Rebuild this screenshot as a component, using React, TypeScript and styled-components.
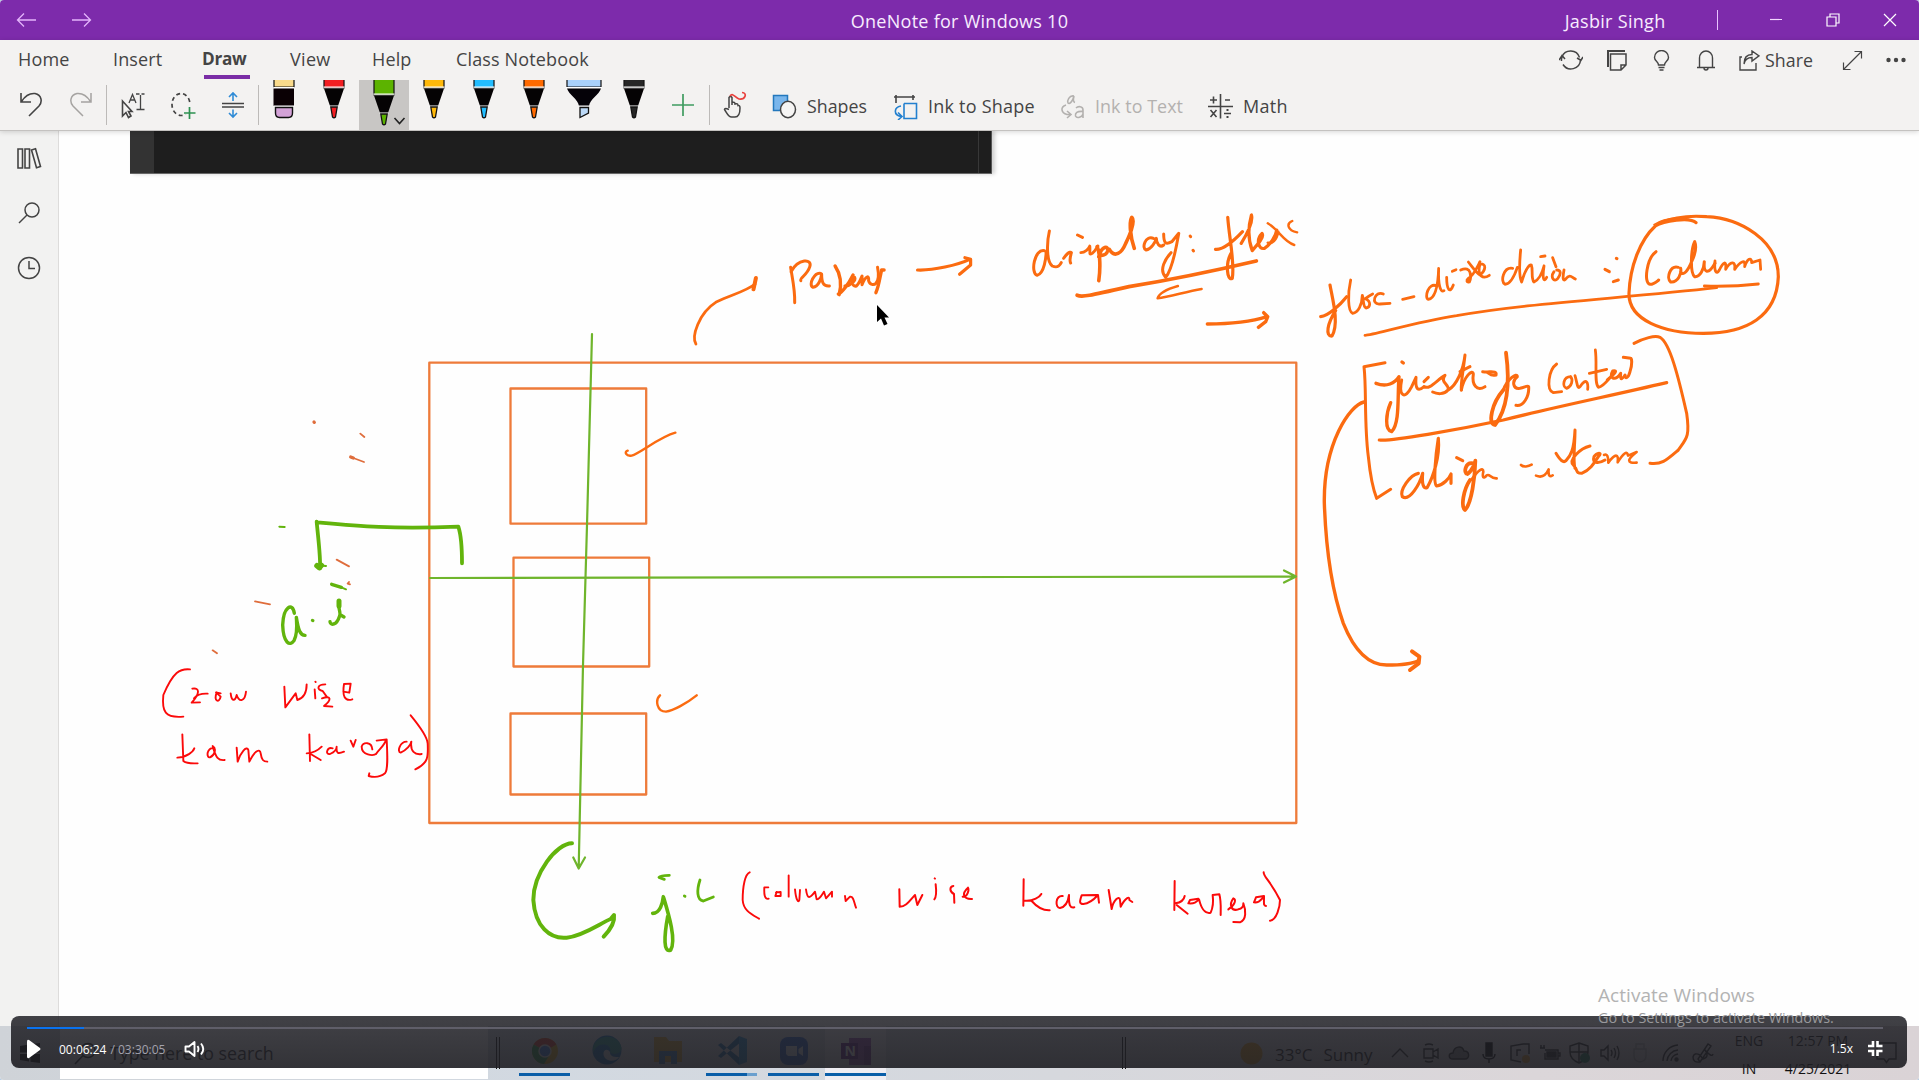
import React from "react";
import styled, { createGlobalStyle } from "styled-components";

const GlobalStyle = createGlobalStyle`
  body { margin: 0; background: #b9cde0; overflow: hidden; }
  * { box-sizing: border-box; }
`;

const font = `"Open Sans", "Noto Sans", sans-serif`;

const Screen = styled.div`
  position: relative;
  display: flex;
  flex-direction: column;
  width: 1919px;
  height: 1080px;
  overflow: hidden;
  border-radius: 4px;
  background: #fff;
  font-family: ${font};
  color: #444;
`;

/* ---------- title bar ---------- */
const TitleBar = styled.header`
  display: grid;
  grid-template-columns: 1fr auto 1fr;
  align-items: center;
  height: 40px;
  background: #7d2bab;
  color: #f8ecff;
`;
const TitleNav = styled.div`
  display: flex;
  gap: 34px;
  padding-left: 16px;
`;
const Label = styled.span<{ $size?: number; $track?: number; $color?: string; $drop?: number }>`
  padding-top: ${(p) => p.$drop ?? 0}px;
  font-size: ${(p) => p.$size ?? 17}px;
  letter-spacing: ${(p) => p.$track ?? 0}px;
  color: ${(p) => p.$color ?? "inherit"};
  line-height: 1.3;
  white-space: nowrap;
`;
const WindowSide = styled.div`
  display: flex;
  align-items: center;
  justify-content: flex-end;
  height: 100%;
  padding-right: 22px;
`;
const WindowDivider = styled.i`
  width: 1.5px;
  height: 20px;
  margin: 0 51px 0 51px;
  background: #e9c4ff;
`;
const WindowButtons = styled.div`
  display: flex;
  gap: 43px;
`;

/* ---------- ribbon ---------- */
const Ribbon = styled.div`
  position: relative;
  z-index: 2;
  height: 91px;
  background: #f3f2f1;
  border-bottom: 1px solid #c4c2c0;
  box-shadow: 0 1px 5px rgba(0, 0, 0, 0.16);
`;
const TabRow = styled.nav`
  display: flex;
  justify-content: space-between;
  height: 40px;
`;
const Tabs = styled.div`
  display: flex;
  padding-left: 18px;
`;
const Tab = styled.div<{ $w: number; $active?: boolean; $track?: number }>`
  position: relative;
  width: ${(p) => p.$w}px;
  padding-top: 7px;
  font-size: ${(p) => (p.$active ? 17.2 : 18)}px;
  line-height: 24px;
  white-space: nowrap;
  letter-spacing: ${(p) => p.$track ?? 0.15}px;
  font-weight: ${(p) => (p.$active ? 700 : 400)};
  &::after {
    content: "";
    display: ${(p) => (p.$active ? "block" : "none")};
    position: absolute;
    left: 2px;
    top: 35px;
    width: 46px;
    height: 4px;
    background: #7a2da6;
  }
`;
const Actions = styled.div`
  display: flex;
  align-items: center;
  padding-right: 9px;
`;
const ActionCell = styled.div<{ $w: number }>`
  display: flex;
  align-items: center;
  justify-content: center;
  gap: 5px;
  width: ${(p) => p.$w}px;
`;
const ToolRow = styled.div`
  display: flex;
  height: 50px;
  padding-left: 6px;
`;
const Tool = styled.div<{ $active?: boolean }>`
  display: flex;
  justify-content: center;
  align-items: center;
  width: 50px;
  height: 50px;
  background: ${(p) => (p.$active ? "#c8c6c4" : "transparent")};
`;
const Divider = styled.i<{ $w?: number }>`
  width: ${(p) => p.$w ?? 1}px;
  height: 40px;
  margin-top: 5px;
  border-left: 1px solid #bcbab8;
`;
const TextTool = styled.div<{ $w: number; $off?: boolean; $inset?: number }>`
  display: flex;
  align-items: center;
  gap: 10px;
  width: ${(p) => p.$w}px;
  padding-top: 3px;
  padding-left: ${(p) => p.$inset ?? 0}px;
  color: ${(p) => (p.$off ? "#b3b1af" : "#444")};
`;

/* ---------- workspace ---------- */
const Workspace = styled.main`
  display: flex;
  flex: 1;
  min-height: 0;
`;
const Rail = styled.aside`
  display: flex;
  flex-direction: column;
  align-items: center;
  gap: 29px;
  width: 59px;
  padding-top: 14px;
  background: #f2f2f1;
  border-right: 1.5px solid #dddcdb;
`;
const Canvas = styled.section`
  position: relative;
  flex: 1;
  background: #fefefe;
`;
const Clip = styled.div`
  display: flex;
  justify-content: space-between;
  width: 862px;
  height: 43px;
  margin-left: 71px;
  background: #1e1e1e;
  border-bottom: 1px solid #666;
  box-shadow: 3px 0 4px rgba(0, 0, 0, 0.18);
  &::before { content: ""; width: 24px; background: #333; }
  &::after { content: ""; width: 12px; border-left: 1px solid #383838; border-right: 1px solid #555; }
`;
const InkSheet = styled.svg`
  position: absolute;
  inset: 0;
  width: 1860px;
  height: 895px;
  fill: none;
  stroke-linecap: round;
  stroke-linejoin: round;
  & path { vector-effect: non-scaling-stroke; }
`;

/* ---------- taskbar ---------- */
const Taskbar = styled.footer`
  display: flex;
  height: 54px;
  background: linear-gradient(90deg, #cfd3d8, #d2d9e1 28%, #d6d8dd 55%, #dbd6d9 80%, #dad3d6);
  color: #111;
`;
const StartCell = styled.div`
  display: flex;
  align-items: center;
  justify-content: center;
  width: 60px;
`;
const SearchBox = styled.div`
  display: flex;
  align-items: center;
  gap: 13px;
  width: 428px;
  height: 53px;
  padding: 2px 0 0 14px;
  background: #fff;
`;
const Bars = styled.div<{ $l: number; $r: number }>`
  width: 4px;
  height: 32px;
  margin: 11px ${(p) => p.$r}px 0 ${(p) => p.$l}px;
  border: solid #111;
  border-width: 0 1px;
`;
const AppCell = styled.div<{ $w: number; $line?: string; $lit?: boolean; $gap?: number }>`
  display: flex;
  flex-direction: column;
  align-items: center;
  justify-content: flex-end;
  width: ${(p) => p.$w}px;
  margin-left: ${(p) => p.$gap ?? 0}px;
  padding-bottom: 4px;
  background: ${(p) => (p.$lit ? "#efedf2" : "transparent")};
  &::after {
    content: "";
    width: 100%;
    height: 3px;
    margin-top: 8px;
    background: ${(p) => p.$line ?? "transparent"};
  }
`;
const Tray = styled.div`
  display: flex;
  align-items: center;
  flex: 1;
`;
const Weather = styled.div`
  display: flex;
  gap: 11px;
  width: 122px;
  padding: 4px 0 0 12px;
`;
const TrayItem = styled.div<{ $w: number }>`
  display: flex;
  justify-content: center;
  width: ${(p) => p.$w}px;
`;
const Stack = styled.div<{ $w: number }>`
  display: flex;
  flex-direction: column;
  justify-content: space-between;
  align-items: center;
  width: ${(p) => p.$w}px;
  height: 50px;
  padding-top: 4px;
`;

/* ---------- player ---------- */
const Player = styled.div`
  position: absolute;
  left: 11px;
  top: 1016px;
  width: 1896px;
  height: 52px;
  padding: 11px 24px 0 16px;
  border-radius: 8px;
  background: linear-gradient(rgba(32, 32, 38, 0.85), rgba(31, 31, 36, 0.91));
  color: #fff;
`;
const Track = styled.div`
  height: 2px;
  background: #5f5e69;
`;
const Played = styled.div`
  height: 2px;
  background: #0a72ee;
`;
const Controls = styled.div`
  display: flex;
  align-items: center;
  height: 41px;
  margin-top: -1px;
`;
const Clock = styled.div`
  display: flex;
  gap: 4px;
  margin: 2px 19px 0 18px;
`;
const Spacer = styled.div` flex: 1; `;

const Watermark = styled.div`
  position: absolute;
  left: 1598px;
  top: 983px;
  display: flex;
  flex-direction: column;
  gap: 1px;
  color: #b3b3b3;
`;
const Pointer = styled.svg`
  position: absolute;
  left: 876px;
  top: 305px;
`;

/* ---------- icons ---------- */
type IconProps = { w?: number; h?: number; box?: string; c?: string; s?: number; children: React.ReactNode };
const Icon = ({ w = 24, h = 24, box, c = "#444", s = 1.4, children }: IconProps) => (
  <svg width={w} height={h} viewBox={box ?? `0 0 ${w} ${h}`} fill="none" stroke={c} strokeWidth={s}>
    {children}
  </svg>
);

const Pen = ({ color, tip = color, active }: { color: string; tip?: string; active?: boolean }) => (
  <Tool $active={active}>
    <svg width="50" height="50" viewBox="0 0 50 50">
      <path d={`M15 0V${active ? 15 : 8}H35V0`} fill={color} stroke="#111" strokeWidth="1.2" />
      <g transform={`translate(0 ${active ? 7 : 0})`}>
        <path d="M15 8.500H35L29 26H21Z" fill="#050304" />
        <path d="M14.500 7.200H35.500M20.500 26H29.500" stroke="#fff" strokeWidth="1.2" />
        <path d="M21.800 27H28.200L26.500 37Q25 38.500 23.500 37Z" fill={tip} stroke="#111" strokeWidth="1.3" />
      </g>
      {active && <path d="M35.500 38L40.500 43.500L45.500 38" fill="none" stroke="#222" strokeWidth="1.6" />}
    </svg>
  </Tool>
);

/* ---------- ink ---------- */
const ORANGE = "#fb6b10";
const GREEN = "#62b40c";
const RED = "#fb0a0a";

type Stroke = { c: string; w: number; d: string };
type Sheet = { at: [number, number]; k: [number, number]; strokes: Stroke[] };
const third = 1 / 3;

const sheets: Sheet[] = [
  {
    at: [0, 0],
    k: [1, 1],
    strokes: [
      { c: "#ee7b3a", w: 2.3, d: "M429.300 362.700H1296.300V823H429.300Z" },
      { c: "#ee7b3a", w: 2.3, d: "M510.500 388.500H646.200V523.700H510.500Z" },
      { c: "#ee7b3a", w: 2.3, d: "M513.500 557.700H649.200V666.500H513.500Z" },
      { c: "#ee7b3a", w: 2.3, d: "M510.500 713.500H646.200V794.500H510.500Z" },
      { c: "#6fb52c", w: 2.2, d: "M430 578L1295 576.500M1284 570.500L1296 576.500L1284 582.500" },
      { c: "#6fb52c", w: 2.2, d: "M592 334L587 525L583 665L578.700 868M573.300 857.500L578.700 868.500L585 857.500" },
    ],
  },
  {
    at: [400, 320],
    k: [third, third],
    strokes: [
      { c: ORANGE, w: 2.4, d: "M683 392C672 395 678 410 695 407C720 400 780 350 826 338M780 1126C765 1140 770 1175 798 1175C820 1172 860 1150 890 1126" },
    ],
  },
  {
    at: [680, 190],
    k: [1 / 2.45, third],
    strokes: [
      { c: ORANGE, w: 2.8, d: "M39 462C28 440 45 370 90 335C130 312 160 305 184 282" },
      { c: ORANGE, w: 4, d: "M186 264L180 298" },
      { c: ORANGE, w: 3, d: "M271 232C276 270 282 300 281 338M272 245C290 205 325 205 318 230C312 255 292 265 296 272M345 250C330 245 313 285 326 292C340 290 346 265 347 252C347 275 350 290 366 288" },
      { c: ORANGE, w: 3.4, d: "M380 228C392 250 398 275 390 314M424 255C412 285 396 308 388 312" },
      { c: ORANGE, w: 3, d: "M404 288C415 290 432 272 428 262C418 262 420 292 432 288C440 280 444 262 446 258L446 284C455 256 464 255 462 272C465 285 475 286 480 280C489 268 486 245 484 232" },
      { c: ORANGE, w: 3.4, d: "M480 308C488 285 490 258 494 240L500 240" },
      { c: ORANGE, w: 3.2, d: "M582 240C620 242 680 225 710 208M698 203L712 208L712 225L685 253" },
      { c: ORANGE, w: 3, d: "M905 123C898 160 898 215 912 228C925 235 930 228 934 218M893 182C868 175 858 250 875 256C893 250 897 200 897 185M940 205C945 195 955 182 959 188C956 200 954 212 957 219M974 135L986 142" },
      { c: ORANGE, w: 2.8, d: "M982 188C992 188 1002 176 1004 168C1006 186 1000 198 1010 190C1018 182 1020 176 1024 168" },
      { c: ORANGE, w: 3.6, d: "M1022 170C1030 190 1030 240 1026 272M1026 200C1034 165 1050 168 1048 182C1046 192 1038 196 1033 196M1052 178C1065 205 1082 190 1092 160C1108 120 1114 90 1107 82C1100 95 1103 140 1113 175" },
      { c: ORANGE, w: 3, d: "M1160 145C1140 135 1130 175 1142 180C1155 178 1165 155 1167 145C1167 160 1175 175 1185 165M1185 132C1185 160 1190 165 1205 155L1222 130C1215 180 1205 240 1190 262C1172 240 1190 205 1203 188M1250 138L1251 140M1257 181L1258 183" },
      { c: ORANGE, w: 3.2, d: "M1342 82C1345 140 1360 220 1353 265C1340 275 1336 220 1350 190M1312 178C1330 180 1355 155 1378 125M1375 160C1395 120 1404 90 1400 75C1392 110 1392 150 1402 182C1418 160 1432 140 1426 130C1412 145 1415 180 1432 175C1445 165 1460 140 1462 120" },
      { c: ORANGE, w: 2.4, d: "M1440 100C1468 120 1478 155 1505 165M1466 125C1462 150 1450 165 1440 158M1500 93C1485 100 1488 122 1512 127" },
      { c: ORANGE, w: 3.8, d: "M973 316C985 322 1000 318 1100 290C1200 270 1300 245 1412 213" },
      { c: ORANGE, w: 2.4, d: "M1278 297C1240 305 1200 320 1170 325C1175 305 1200 295 1220 288" },
      { c: ORANGE, w: 3.4, d: "M1292 402C1340 402 1400 395 1438 380M1430 368L1440 380L1435 395L1417 412" },
    ],
  },
  {
    at: [1290, 190],
    k: [third, third],
    strokes: [
      { c: ORANGE, w: 3.2, d: "M92 380C115 378 150 345 170 320M120 285C128 330 148 400 126 438C105 440 112 400 137 362" },
      { c: ORANGE, w: 2.8, d: "M182 270C173 310 173 365 188 370C205 368 216 345 217 316C222 330 218 350 228 354C242 352 244 334 226 326C236 318 244 314 248 312M280 312C255 300 240 345 270 342L300 340M338 328L372 320" },
      { c: ORANGE, w: 2.8, d: "M440 288C415 275 402 325 415 328C435 325 444 295 446 235C444 280 450 310 462 302M470 262C470 300 480 312 490 285M487 244L498 239M512 240C545 225 545 262 538 276C530 278 528 270 535 265C550 258 560 235 570 215M535 216C550 235 560 250 570 255C588 240 590 220 570 222C560 260 580 268 598 256" },
      { c: ORANGE, w: 2.8, d: "M668 235C640 230 630 275 645 283C660 282 672 262 682 232M692 180C688 220 688 262 695 276C705 240 718 222 724 225C730 240 722 265 732 276C745 270 755 255 762 228M752 200L765 198M762 228C756 268 762 278 770 262M788 203L798 230M792 245C780 262 792 278 803 266C815 250 812 240 800 240M822 240C818 262 818 275 826 268C840 250 845 262 856 267" },
      { c: ORANGE, w: 3, d: "M945 238L958 245M979 205L981 206M970 275L985 270" },
      { c: ORANGE, w: 3.2, d: "M1110 98C1150 82 1200 76 1250 80C1350 85 1465 150 1465 260C1460 380 1370 430 1240 430C1120 430 1015 390 1017 310C1020 230 1050 150 1096 108C1120 92 1200 80 1218 98" },
      { c: ORANGE, w: 1.6, d: "M1092 104C1110 92 1140 85 1160 84" },
      { c: ORANGE, w: 3, d: "M1098 185C1070 205 1060 280 1080 283C1092 283 1100 275 1106 270M1165 232C1140 225 1128 265 1142 276C1165 278 1175 250 1172 235M1172 245C1180 260 1195 240 1205 215C1217 190 1220 170 1214 155C1202 180 1200 250 1214 260C1230 262 1242 238 1243 215C1240 250 1255 255 1275 220" },
      { c: ORANGE, w: 2.8, d: "M1275 213C1272 240 1278 258 1288 240C1300 215 1310 210 1307 238C1320 215 1338 210 1334 238C1350 215 1368 205 1364 230C1372 205 1385 200 1385 218L1410 210L1412 238" },
      { c: ORANGE, w: 2.8, d: "M225 436C240 438 380 395 500 377C700 340 1000 325 1280 293M1243 288C1300 290 1350 288 1405 282" },
      { c: ORANGE, w: 3, d: "M285 518L222 530C230 600 222 700 235 800C240 850 250 900 260 925L302 898" },
      { c: ORANGE, w: 3.4, d: "M258 580C290 592 315 580 327 560C322 620 330 700 305 725C283 720 288 670 302 638M336 516L340 519" },
      { c: ORANGE, w: 3, d: "M335 570C325 620 345 630 365 590L378 562C375 600 385 605 402 590M402 575L415 562M402 590C420 600 440 570 465 556C448 578 480 582 474 600C462 615 440 612 428 606M475 600C500 585 520 540 525 495C520 540 512 580 514 600" },
      { c: ORANGE, w: 3, d: "M510 545L540 530M514 600C522 560 548 535 550 552C545 585 560 605 585 590M578 545C600 548 622 540 618 555C600 560 600 550 590 546" },
      { c: ORANGE, w: 3.8, d: "M648 488C655 540 665 640 615 705C593 700 605 640 640 600" },
      { c: ORANGE, w: 3, d: "M640 600C650 570 682 545 682 560C665 572 668 598 690 595C705 592 712 585 716 590C718 620 700 650 678 646" },
      { c: ORANGE, w: 2.8, d: "M800 522C775 540 768 600 790 608L815 605M842 560C820 560 815 590 830 595C845 590 850 570 842 560M855 557C862 580 862 600 870 590C890 560 895 580 893 598M916 480C922 520 912 580 925 592C935 590 950 575 958 565M898 550L950 538" },
      { c: ORANGE, w: 3, d: "M952 570C975 550 985 540 968 543C955 565 975 575 992 550C990 572 995 570 1005 555C1005 568 1015 565 1020 545C1028 520 1025 505 1022 505L1000 502" },
      { c: ORANGE, w: 3.2, d: "M268 750C300 755 500 720 640 690C800 650 950 620 1130 578" },
      { c: ORANGE, w: 3, d: "M1032 460C1060 445 1095 435 1110 442C1140 460 1165 560 1190 670C1200 740 1190 745 1165 780C1130 810 1115 825 1080 820" },
      { c: ORANGE, w: 3.2, d: "M385 850C360 855 328 900 337 920C360 935 390 880 398 850C395 880 400 900 412 892C430 860 450 800 445 745C438 790 428 880 440 888C460 885 478 865 483 852L483 880M500 803L518 812" },
      { c: ORANGE, w: 3.8, d: "M550 820C525 815 520 850 532 852C545 845 555 820 556 812C555 860 545 940 525 960C512 950 520 900 540 870" },
      { c: ORANGE, w: 2.6, d: "M545 868C565 840 580 830 580 845C576 862 580 868 590 856C600 850 600 866 620 865M693 825C700 832 715 830 725 824M738 857C755 864 768 856 776 838C774 858 780 862 788 856" },
      { c: ORANGE, w: 3, d: "M798 790C810 810 820 820 828 812C842 798 852 780 855 720C855 770 848 810 855 835M900 768C870 775 835 810 850 825C865 840 855 850 875 850C900 840 912 820 925 800C940 785 920 788 912 800C905 820 925 822 945 810" },
      { c: ORANGE, w: 2.6, d: "M942 795C952 790 955 800 955 818C975 790 987 790 983 817C1000 790 1012 780 1014 797L1040 786C1010 810 1010 820 1040 818" },
      { c: ORANGE, w: 3.4, d: "M222 636C180 645 100 760 103 940C108 1080 125 1200 160 1300C200 1400 250 1425 290 1425C330 1425 365 1422 385 1412" },
      { c: ORANGE, w: 4, d: "M366 1384L388 1400L386 1420L360 1440" },
    ],
  },
  {
    at: [140, 400],
    k: [third, third],
    strokes: [
      { c: GREEN, w: 3.8, d: "M530 367C650 378 750 388 955 380C965 410 966 450 966 490M530 365C535 420 542 470 540 505" },
      { c: GREEN, w: 5.5, d: "M531 497L538 503L544 496" },
      { c: GREEN, w: 3.4, d: "M463 640C458 605 430 620 428 675C430 730 450 740 462 722C474 700 470 670 469 652C475 690 480 705 495 706M575 553L604 562M597 612C595 635 605 640 598 650C590 675 572 678 570 665M602 645L612 651" },
      { c: GREEN, w: 5, d: "M597 603L597 618" },
      { c: GREEN, w: 2, d: "M418 380L434 381M604 562L618 568M550 497L558 498" },
      { c: GREEN, w: 3, d: "M517 661L519 662" },
      { c: "#df6d3c", w: 1.8, d: "M661 101L673 111M632 171L672 186M590 479L627 499M345 604L390 613M218 751L231 760M627 546L623 551L630 553" },
      { c: "#df6d3c", w: 3.2, d: "M522 66L523 67M632 171L640 174" },
      { c: RED, w: 1.9, d: "M150 808C120 805 100 815 70 885C65 935 75 955 130 950M157 866C180 862 180 880 155 908L180 907M162 895C170 885 185 880 203 881M230 877C220 905 238 910 242 890L228 877L242 880M272 880C275 905 285 905 290 885C298 908 315 905 318 875" },
      { c: RED, w: 1.9, d: "M433 860L436 922L467 880L472 900C490 895 500 880 500 853M524 868L526 895M526 845L527 846M556 853C530 853 530 870 548 873L560 890M546 895C575 885 575 900 552 918L577 920M610 875L628 878L632 851L612 852C606 890 615 905 637 898" },
      { c: RED, w: 1.9, d: "M127 1003L130 1083C140 1092 160 1090 173 1090M112 1073C140 1072 160 1055 163 1045M222 1045C200 1040 198 1075 210 1072C225 1065 230 1045 218 1038C228 1075 235 1082 254 1080M290 1043L293 1085C300 1060 320 1035 325 1050L328 1085C345 1050 360 1045 362 1060C365 1080 370 1085 382 1085" },
      { c: RED, w: 1.9, d: "M508 1003L510 1083M500 1060C520 1060 535 1050 545 1040M512 1062L542 1080M578 1045C560 1040 555 1065 570 1062C585 1055 590 1045 590 1040C588 1062 595 1062 612 1055M632 1022L640 1040L647 1020M697 1048C695 1025 670 1025 665 1040C665 1065 700 1070 710 1060M710 1022L740 1018C742 1060 745 1110 735 1120C720 1132 700 1132 686 1128L688 1120M738 1020C735 1035 715 1050 708 1062" },
      { c: RED, w: 1.9, d: "M800 1025C780 1025 770 1055 782 1058C800 1050 812 1035 814 1025C810 1055 825 1065 845 1062M812 946C840 980 862 1015 863 1030C865 1070 865 1090 826 1108" },
    ],
  },
  {
    at: [500, 800],
    k: [third, third],
    strokes: [
      { c: GREEN, w: 4, d: "M216 130C170 130 100 220 100 300C105 380 150 418 200 413C250 408 300 370 332 357L342 345C345 365 330 390 311 410" },
      { c: GREEN, w: 3.6, d: "M458 340C480 340 488 310 490 290C505 340 530 420 512 450C490 460 492 410 503 350" },
      { c: GREEN, w: 2.8, d: "M508 226C495 226 480 228 477 232L493 238M553 288L555 289M600 240C590 270 590 300 610 303L640 291" },
      { c: RED, w: 1.9, d: "M749 217C735 222 728 260 728 300C730 330 750 340 777 356M805 262L793 262C792 280 793 300 806 296M830 276L826 288L842 288L842 276L828 277M866 226L866 290M885 268C888 300 895 310 898 300L900 270M918 268C922 300 930 295 945 275L950 298C960 298 968 280 972 275L978 295L996 275L996 290M1035 288L1037 303L1050 290C1062 288 1062 310 1068 323" },
    ],
  },
  {
    at: [880, 840],
    k: [third, third],
    strokes: [
      { c: RED, w: 2, d: "M58 148L59 200C80 200 90 180 105 165L112 195L127 165M167 133C169 150 170 170 163 178M164 115L165 116M220 138C208 140 208 155 222 162L223 188M248 170C262 172 268 150 264 143C245 160 248 178 276 177" },
      { c: RED, w: 2, d: "M431 118L430 197M433 182C460 185 480 170 484 162M455 183C470 200 490 212 509 211M548 168C525 165 525 205 540 204C560 200 565 180 567 165C566 195 570 205 583 202M652 165L605 166C598 185 598 192 610 192C630 190 645 175 654 165L657 188M686 150L695 207C700 180 718 165 720 180L722 200C735 175 750 165 748 180L757 186" },
      { c: RED, w: 2, d: "M884 123L883 210M886 190C900 188 912 180 914 168M890 195L923 221M955 176L930 180L925 190C945 192 950 185 957 178C965 210 975 222 992 218C1000 200 1000 180 998 165L1018 163C1024 185 1022 205 1022 225M1045 208C1065 195 1070 178 1060 175C1045 195 1055 215 1075 208C1092 205 1090 195 1090 190C1098 210 1100 240 1080 247L1060 246" },
      { c: RED, w: 2, d: "M1152 168L1128 172L1122 187C1140 190 1145 175 1152 170C1152 190 1150 197 1158 198M1151 97C1150 110 1170 120 1200 180C1200 200 1190 240 1170 242" },
    ],
  },
];

const Ink = () => (
  <InkSheet viewBox="59 131 1860 895">
    {sheets.map((s, i) => (
      <g key={i} transform={`translate(${s.at[0]} ${s.at[1]}) scale(${s.k[0]} ${s.k[1]})`}>
        {s.strokes.map((t, j) => (
          <path key={j} d={t.d} stroke={t.c} strokeWidth={t.w} />
        ))}
      </g>
    ))}
  </InkSheet>
);

export default function App() {
  return (
    <>
      <GlobalStyle />
      <Screen>
        <TitleBar>
          <TitleNav>
            <Icon w={21} h={16} c="#e3b5fb" s={1.3}><path d="M20 8H1.500M8 1.500L1.500 8L8 14.500" /></Icon>
            <Icon w={21} h={16} c="#e3b5fb" s={1.3}><path d="M1 8H19.500M13 1.500L19.500 8L13 14.500" /></Icon>
          </TitleNav>
          <Label $size={18} $track={0.27} $drop={3}>OneNote for Windows 10</Label>
          <WindowSide>
            <Label $size={18} $track={0.3} $drop={3}>Jasbir Singh</Label>
            <WindowDivider />
            <WindowButtons>
              <Icon w={14} h={14} c="#f3d8ff" s={1.2}><path d="M1 6.500H13" /></Icon>
              <Icon w={14} h={14} c="#fff" s={1.2}><path d="M1 4H10V13H1ZM4 4V1H13V10H10" /></Icon>
              <Icon w={14} h={14} c="#fff" s={1.2}><path d="M1 1L13 13M13 1L1 13" /></Icon>
            </WindowButtons>
          </WindowSide>
        </TitleBar>

        <Ribbon>
          <TabRow>
            <Tabs>
              <Tab $w={95}>Home</Tab>
              <Tab $w={89}>Insert</Tab>
              <Tab $w={88} $active $track={-0.3}>Draw</Tab>
              <Tab $w={82} $track={0.3}>View</Tab>
              <Tab $w={84}>Help</Tab>
              <Tab $w={150}>Class Notebook</Tab>
            </Tabs>
            <Actions>
              <ActionCell $w={46}>
                <Icon s={1.5}><path d="M3 9A9.300 9.300 0 0 1 20.500 9.500M21.500 12A9.500 9.500 0 0 1 4 16.500M2.500 13A9 9 0 0 1 3 9M21.500 12L18 10M21.500 13L24 9M0 12L3 7.500L6 11" /></Icon>
              </ActionCell>
              <ActionCell $w={45}>
                <Icon w={20} h={21} s={1.5}><path d="M1 17V1H18" strokeWidth="2" /><path d="M3.500 4H19V15L14 20H3.500ZM19 15H14V20" /></Icon>
              </ActionCell>
              <ActionCell $w={44}>
                <Icon w={17} h={21}><path d="M5.500 15C5.500 11.500 1.500 11 1.500 7.500A7 7 0 0 1 15.500 7.500C15.500 11 11.500 11.500 11.500 15ZM5.500 17.500H11.500M6.500 20H10.500" /></Icon>
              </ActionCell>
              <ActionCell $w={46}>
                <Icon w={20} h={21}><path d="M1 17.500H19M3.500 17.500V8A6.500 7 0 0 1 16.500 8V17.500M8 18A2 2 0 0 0 12 18" /></Icon>
              </ActionCell>
              <ActionCell $w={94}>
                <Icon w={21} h={21}><path d="M3 7H1V20H17V13M5 14C6 9 9 7.500 13 7.500V11L20 5.800L13 1V4.500C8 4.500 5 8 5 14Z" /></Icon>
                <Label $size={17.8} $drop={1}>Share</Label>
              </ActionCell>
              <ActionCell $w={59}>
                <Icon w={21} h={21} s={1.2}><path d="M1.500 19.500L19.500 1.500M12.500 1.500H19.500V8.500M1.500 12.500V19.500H8.500" /></Icon>
              </ActionCell>
              <ActionCell $w={28}>
                <Icon w={22} h={6} s={0}><g fill="#444"><circle cx="3.500" cy="3" r="2.200" /><circle cx="11" cy="3" r="2.200" /><circle cx="18.500" cy="3" r="2.200" /></g></Icon>
              </ActionCell>
            </Actions>
          </TabRow>

          <ToolRow>
            <Tool><Icon w={24} h={26} s={1.6}><path d="M2 1V10H12M2.500 9.500C6 4 11 1 16 1.500C23 3 23.500 10 20 14L10 24" /></Icon></Tool>
            <Tool><Icon w={24} h={26} s={1.5} c="#a5a3a1"><path d="M22 1V10H12M21.500 9.500C18 4 13 1 8 1.500C1 3 .5 10 4 14L14 24" /></Icon></Tool>
            <Divider $w={2} />
            <Tool>
              <Icon w={26} h={28} s={1.3}>
                <path d="M2.500 10V25L6 21.500L8.500 26.500L11 25L8.500 20.500H12Z" strokeWidth="1.6" />
                <path d="M9 12L12.500 3.500L16 12M10.300 9H14.700M16 3H19.500M24.500 3H21.500M20.500 4V18M16.500 18.500H24.500" />
              </Icon>
            </Tool>
            <Tool>
              <Icon w={26} h={28} s={1.7}>
                <ellipse cx="11" cy="13.500" rx="9" ry="11" strokeDasharray="4 3" />
                <path d="M19 13V28M13 21H26" stroke="#f3f2f1" strokeWidth="5" />
                <path d="M19.500 16V28M14 22H25.500" stroke="#2d9150" />
              </Icon>
            </Tool>
            <Tool>
              <Icon w={24} h={28} s={1.6}>
                <path d="M1 12.500H23M1 16H23" />
                <path d="M12 10V2.500M8 6L12 2L16 6M12 18.500V26M8 22L12 26L16 22" stroke="#2f8bd6" />
              </Icon>
            </Tool>
            <Divider />
            <Tool>
              <svg width="50" height="50" viewBox="0 0 50 50">
                <path d="M15 0V7H35V0" fill="#fadb8b" stroke="#111" strokeWidth="1.200" />
                <path d="M14.500 8.500H35V26H14.500Z" fill="#0a0004" />
                <path d="M14.500 7.500H35.500M14.500 26H35.500" stroke="#fff" strokeWidth="1.200" />
                <path d="M16.500 27.500H33.500V33Q33.500 37.500 29.500 37.500H20.500Q16.500 37.500 16.500 33Z" fill="#d3a2d7" stroke="#111" strokeWidth="1.400" />
              </svg>
            </Tool>
            <Pen color="#f21e22" />
            <Pen color="#5cb300" active />
            <Pen color="#ffb90a" />
            <Pen color="#22bdff" />
            <Pen color="#ff6a00" />
            <Tool>
              <svg width="50" height="50" viewBox="0 0 50 50">
                <path d="M8 0V7H42V0" fill="#a9d1fb" stroke="#111" strokeWidth="1.200" />
                <path d="M8 8.500H42C40 15 31 19 30 26H20C19 19 10 15 8 8.500Z" fill="#050208" />
                <path d="M7 7.500H43M19.500 26H30.500" stroke="#fff" strokeWidth="1.200" />
                <path d="M21 27.500H29.500V33L21 37.500Z" fill="#bcd9f7" stroke="#111" strokeWidth="1.300" />
              </svg>
            </Tool>
            <Pen color="#262626" />
            <Tool><Icon w={24} h={24} s={1.7} c="#3f9c60"><path d="M11 1V23M0 12H22" /></Icon></Tool>
            <Divider />
            <Tool>
              <Icon w={26} h={28} s={1.5}>
                <path d="M7 17V6.500Q8.500 4.500 10 6.500V14M10 11.500Q13 10.500 13 13Q16 12 16 14.500Q18 14 18 17C18 21 17 26 13 26H9.500C6 26 5 22 2.500 18.500Q2.500 16.500 7 18.500" />
                <path d="M8 5C11 1 13 7 17 8C23 9 26 2 20 1.500" stroke="#e8403c" strokeWidth="1.700" />
              </Icon>
            </Tool>
            <TextTool $w={133} $inset={12}>
              <Icon w={25} h={25} s={1.5}>
                <path d="M1.500 1.500H15.500V16.500H1.500Z" fill="#79b6ec" stroke="#2378bd" />
                <ellipse cx="16" cy="15.500" rx="7.500" ry="8.200" fill="#f6f5f4" />
              </Icon>
              <Label $size={17.8} $drop={1}>Shapes</Label>
            </TextTool>
            <TextTool $w={167}>
              <Icon w={25} h={26} s={1.6}>
                <path d="M3 1V9M20 1V6M1 3H22" />
                <path d="M11 9.500H23.500V24.500H11V9.500M8 12C1 13 0 21 8 22.500M5 18.500L9 22.500L5 26" stroke="#2380cf" />
              </Icon>
              <Label $size={18} $track={0.22} $drop={1}>Ink to Shape</Label>
            </TextTool>
            <TextTool $w={148} $off>
              <Icon w={25} h={27} s={1.600} c="#b3b1af">
                <path d="M14 3C9 2 7 8 8 10C10 12 13 7 14 3C13 7 13 9 15 9.500M6 12C0 14 1 20 7 21.500H10M7 18L11 21.500L7 25M16 15C18 13 23 13 23 17V25M23 18.500C17 18 15 20 15.500 23C17 26 22 24 23 21" />
              </Icon>
              <Label $size={17.9} $track={0.05} $drop={1}>Ink to Text</Label>
            </TextTool>
            <TextTool $w={90}>
              <Icon w={25} h={25} s={1.600}>
                <path d="M12.500 0V24.500M0 12.500H25M2 6H9M5.500 2.500V9.500M17 6H22M2.500 16L8.500 23M8.500 16L2.500 23M16 19.500H23" />
                <path d="M19.500 15V17M19.500 22V24" strokeWidth="2" />
              </Icon>
              <Label $size={18} $track={0.3} $drop={1}>Math</Label>
            </TextTool>
          </ToolRow>
        </Ribbon>

        <Workspace>
          <Rail>
            <Icon w={26} h={26} s={1.600}>
              <path d="M2 4H6.500V23H2ZM9 4H13.500V23H9ZM15.500 5L19.500 3.800L24.500 21.500L20.500 22.800Z" />
            </Icon>
            <Icon w={26} h={26} s={1.500}><circle cx="16" cy="10" r="7" /><path d="M11 15L3 23" /></Icon>
            <Icon w={26} h={26} s={1.500}><circle cx="13" cy="13" r="10.500" /><path d="M13 6V13.500H19" /></Icon>
          </Rail>
          <Canvas>
            <Clip />
            <Ink />
          </Canvas>
        </Workspace>

        <Taskbar>
          <StartCell>
            <Icon w={20} h={20} s={0}><path d="M0 3L9 1.500V9.500H0ZM10.500 1.300L20 0V9.500H10.500ZM0 11H9V18.500L0 17ZM10.500 11H20V20L10.500 18.700Z" fill="#000" /></Icon>
          </StartCell>
          <SearchBox>
            <Icon w={23} h={23} c="#222" s={1.600}><circle cx="14" cy="8.500" r="7" /><path d="M9 13.500L1 22" /></Icon>
            <Label $size={17.800} $color="#222">Type here to search</Label>
          </SearchBox>
          <Bars $l={8} $r={19} />
          <AppCell $w={51} $line="#0a5ea8">
            <svg width="28" height="28" viewBox="0 0 28 28">
              <circle cx="14" cy="14" r="13" fill="#e3b01f" />
              <path d="M14 14L2.700 7.500A13 13 0 0 1 25.300 7.500Z" fill="#d63a2f" />
              <path d="M14 14L2.700 7.500A13 13 0 0 0 13 27L19 17Z" fill="#2d9a4b" />
              <circle cx="14" cy="14" r="6" fill="#3d7fe8" stroke="#ddd" strokeWidth="1.500" />
            </svg>
          </AppCell>
          <AppCell $w={51} $gap={11}>
            <svg width="30" height="30" viewBox="0 0 30 30">
              <circle cx="15" cy="15" r="14.500" fill="#1572b8" />
              <path d="M1 13C4 -2 27 -2 29.500 13C29 20 20 20 18 17C20 11 13 8 8 10Q3 12 1 18Z" fill="#2a9c98" />
              <path d="M18 17C14 11 8 18 14 24C18 27 25 26 27 22C23 22 18 22 18 17Z" fill="#cfd6dd" />
            </svg>
          </AppCell>
          <AppCell $w={51} $gap={10}>
            <svg width="28" height="29" viewBox="0 0 28 29">
              <path d="M0 1H12L15 5H28V26H0Z" fill="#d8a73a" />
              <path d="M5 28V15H23V28H17V20H11V28Z" fill="#3f83c4" />
            </svg>
          </AppCell>
          <AppCell $w={51} $gap={13} $line="linear-gradient(90deg, #0a5ea8 80%, #6a9fce 80%)">
            <svg width="30" height="29" viewBox="0 0 30 29">
              <path d="M1 9L4 7L24 23L22 29ZM1 20L4 22L24 6L22 0Z" fill="#1b6fae" />
              <path d="M22 0L30 3V26L22 29Z" fill="#2a8fd0" />
            </svg>
          </AppCell>
          <AppCell $w={51} $gap={11} $line="#0a5ea8">
            <svg width="28" height="28" viewBox="0 0 28 28">
              <rect width="28" height="28" rx="8" fill="#2f66c9" />
              <path d="M6 9H17V19H8L6 17ZM18.500 12L23 9V19L18.500 16Z" fill="#dfe6f0" />
            </svg>
          </AppCell>
          <AppCell $w={61} $gap={6} $line="#0a5ea8" $lit>
            <svg width="30" height="27" viewBox="0 0 30 27">
              <path d="M8 0H30V27H8Z" fill="#9a4fb0" />
              <path d="M23 8H30V27H23Z" fill="#7a3494" />
              <path d="M0 5H17V21H0Z" fill="#66208a" />
              <text x="3.500" y="18" fill="#fff" fontSize="14" fontWeight="700" fontFamily="Open Sans">N</text>
            </svg>
          </AppCell>
          <Bars $l={236} $r={114} />
          <Tray>
            <Icon w={23} h={23} s={0}><circle cx="11.500" cy="11.500" r="11" fill="#dd9a22" /></Icon>
            <Weather>
              <Label $size={17}>33°C</Label>
              <Label $size={17}>Sunny</Label>
            </Weather>
            <TrayItem $w={30}><Icon w={18} h={12} c="#222"><path d="M1 10L9 2L17 10" /></Icon></TrayItem>
            <TrayItem $w={30}><Icon w={17} h={20} c="#222"><path d="M2 6H11V15H2ZM11 9L16 6V15L11 12M3 2Q7 0 11 2M3 18Q7 20 11 18" /></Icon></TrayItem>
            <TrayItem $w={28}><Icon w={22} h={16} c="#222"><path d="M5 14C0 14 0 8 5 8C6 1 14 0 16 6C22 6 22 14 17 14Z" fill="#8a8a8a" /></Icon></TrayItem>
            <TrayItem $w={32}><Icon w={14} h={22} c="#000"><path d="M4 1H10V14H4Z" fill="#000" /><path d="M1 12Q1 17 7 17Q13 17 13 12M7 17V21" /></Icon></TrayItem>
            <TrayItem $w={30}><Icon w={22} h={20} c="#222"><path d="M14 1L2 3V17L12 19M14 1H20V11M12 7H8V13" /><circle cx="17" cy="16" r="4" fill="#e29a2d" stroke="none" /></Icon></TrayItem>
            <TrayItem $w={30}><Icon w={22} h={16} c="#222"><path d="M6 5H19V14H6V8M19 8H21V11H19M1 3H6M2 0V3M5 0V3" /><path d="M8 7H17V12H8Z" fill="#222" /></Icon></TrayItem>
            <TrayItem $w={30}><Icon w={22} h={22} c="#222"><path d="M10 1L19 4V10C19 16 15 19 10 21C5 19 1 16 1 10V4ZM10 1V21M1 10H19" /><circle cx="16" cy="16" r="5" fill="#1d7d58" stroke="none" /></Icon></TrayItem>
            <TrayItem $w={30}><Icon w={21} h={18} c="#222"><path d="M1 6H4L8 2V16L4 12H1ZM11 6Q13 9 11 12M14 4Q17 9 14 14M17 2Q21 9 17 16" /></Icon></TrayItem>
            <TrayItem $w={30}><Icon w={14} h={20} c="#aaa"><path d="M3 1H11V6H3ZM1 6H13V13Q13 18 7 19Q1 18 1 13Z" /></Icon></TrayItem>
            <TrayItem $w={31}><Icon w={17} h={18} c="#222"><path d="M1 17A16 16 0 0 1 16 1M5 17A12 12 0 0 1 16 6M9 17A8 8 0 0 1 16 10" /><circle cx="14.500" cy="15.500" r="1.500" fill="#222" /></Icon></TrayItem>
            <TrayItem $w={34}><Icon w={22} h={22} c="#222"><path d="M8 20L19 4L16 2L6 17ZM8 20Q1 21 1 15Q2 10 8 13L11 17Q18 15 13 8Q20 16 21 12" /></Icon></TrayItem>
            <Stack $w={58}>
              <Label $size={14}>ENG</Label>
              <Label $size={14}>IN</Label>
            </Stack>
            <Stack $w={80}>
              <Label $size={14}>12:57 PM</Label>
              <Label $size={14}>4/25/2021</Label>
            </Stack>
            <TrayItem $w={56}><Icon w={21} h={22} c="#222"><path d="M1 1H20V17H13L10.500 20.500L8 17H1Z" /></Icon></TrayItem>
          </Tray>
        </Taskbar>

        <Player>
          <Track><Played style={{ width: `${(384 / 12605) * 100}%` }} /></Track>
          <Controls>
            <Icon w={14} h={20} s={0}><path d="M0 2.500Q0 0 2 1L13 9Q14 10 13 11L2 19Q0 20 0 17.500Z" fill="#fff" /></Icon>
            <Clock>
              <Label $size={12}>00:06:24</Label>
              <Label $size={12} $color="#a3a2ad">/ 03:30:05</Label>
            </Clock>
            <Icon w={21} h={18} c="#fff" s={1.900}><path d="M1.500 6.500H5L10.500 2V16L5 11.500H1.500Z" strokeLinejoin="round" /><path d="M13.500 6Q15.500 9 13.500 12M17 3.500Q21.500 9 17 14.500" /></Icon>
            <Spacer />
            <Label $size={12}>1.5x</Label>
            <Icon w={30} h={16} box="-15 0 30 16" c="#fff" s={2.600}><path d="M5 0V5H0M9.500 0V5H14.500M5 15V10H0M9.500 15V10H14.500" /></Icon>
          </Controls>
        </Player>
        <Watermark>
          <Label $size={19} $track={0.05}>Activate Windows</Label>
          <Label $size={14.4} $color="#98989b">Go to Settings to activate Windows.</Label>
        </Watermark>
        <Pointer width="16" height="22" viewBox="0 0 16 22">
          <path d="M1 0V17L5 13.500L8 20.500L11.500 19L8.500 12.500H13Z" fill="#000" />
        </Pointer>
      </Screen>
    </>
  );
}
